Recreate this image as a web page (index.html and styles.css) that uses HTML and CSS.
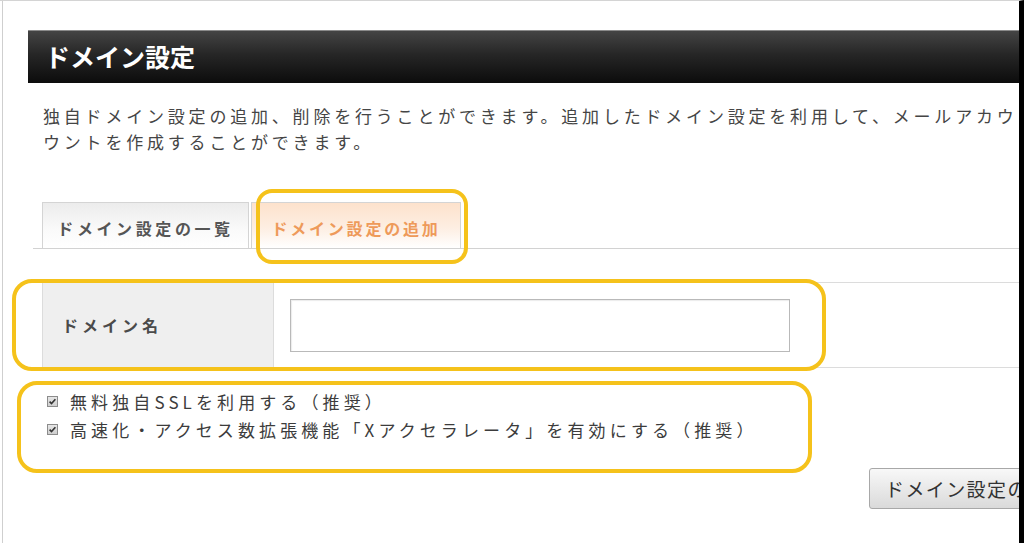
FILE: index.html
```html
<!DOCTYPE html>
<html lang="ja">
<head>
<meta charset="utf-8">
<title>ドメイン設定</title>
<link rel="stylesheet" href="styles.css">
</head>
<body>
<div class="page">
  <div class="frame">
    <h1 class="title-bar">ドメイン設定</h1>
    <p class="desc">独自ドメイン設定の追加、削除を行うことができます。追加したドメイン設定を利用して、メールアカウ<br>ウントを作成することができます。</p>

    <div class="tabs">
      <div class="tab">ドメイン設定の一覧</div>
      <div class="tab active">ドメイン設定の追加</div>
    </div>

    <div class="form-row">
      <div class="label-cell">ドメイン名</div>
      <div class="input-cell"><input class="text-input" type="text"></div>
    </div>

    <div class="options">
      <label class="option"><span class="check"><svg viewBox="0 0 11 11" width="11" height="11"><path d="M2.6 5.6 L4.5 7.6 L8.4 3.2" fill="none" stroke="#333" stroke-width="1.6"/></svg></span><span class="opt-text">無料独自SSLを利用する（推奨）</span></label>
      <label class="option"><span class="check"><svg viewBox="0 0 11 11" width="11" height="11"><path d="M2.6 5.6 L4.5 7.6 L8.4 3.2" fill="none" stroke="#333" stroke-width="1.6"/></svg></span><span class="opt-text">高速化・アクセス数拡張機能「Xアクセラレータ」を有効にする（推奨）</span></label>
    </div>

    <div class="actions">
      <button class="btn" type="button">ドメイン設定の追加（確認）</button>
    </div>
  </div>

  <div class="mark mark-tab"></div>
  <div class="mark mark-row"></div>
  <div class="mark mark-opts"></div>
</div>
</body>
</html>
```
FILE: styles.css
```css
html, body {
  margin: 0;
  padding: 0;
  background: #fff;
}

body {
  font-family: "Noto Sans CJK JP", "Noto Sans", sans-serif;
  color: #444;
}

.page {
  position: relative;
  width: 1024px;
  height: 543px;
  box-sizing: border-box;
  border-top: 1px solid #d4d4d4;
  border-right: 5px solid #000;
  overflow: hidden;
}

.frame {
  margin-left: 2px;
  height: 100%;
  box-sizing: border-box;
  border-left: 1px solid #cfcfcf;
  padding: 29px 0 0 25px;
}

.title-bar {
  margin: 0;
  height: 53px;
  box-sizing: border-box;
  border-top: 1px solid #8a8a8a;
  background: linear-gradient(#444 0%, #262626 45%, #0c0c0c 100%);
  color: #fff;
  font-size: 25px;
  font-weight: bold;
  line-height: 50px;
  padding-left: 17px;
  white-space: nowrap;
}

.desc {
  margin: 20px 0 0 0;
  padding-left: 15px;
  font-size: 17px;
  letter-spacing: 3.8px;
  line-height: 26px;
  white-space: nowrap;
  color: #454545;
}

.tabs {
  margin: 47px 0 0 5px;
  padding-left: 9px;
  display: flex;
  gap: 2px;
  border-bottom: 1px solid #d2d2d2;
}

.tab {
  height: 46px;
  box-sizing: border-box;
  width: 207px;
  border: 1px solid #d4d4d4;
  border-bottom: none;
  background: linear-gradient(#ececec, #fafafa 60%, #fff);
  font-size: 16px;
  font-weight: bold;
  letter-spacing: 3.6px;
  color: #555;
  display: flex;
  align-items: center;
  justify-content: center;
  padding-top: 4px;
}

.tab.active {
  width: 210px;
  background: linear-gradient(#fde2cc, #fdeee2 55%, #fff);
  color: #ee9a5a;
  letter-spacing: 2.8px;
}

.form-row {
  margin: 33px 0 0 14px;
  display: flex;
  height: 86px;
  box-sizing: border-box;
  border-top: 1px solid #dcdcdc;
  border-bottom: 1px solid #dcdcdc;
  border-left: 1px solid #dcdcdc;
}

.label-cell {
  width: 231px;
  box-sizing: border-box;
  background: #efefef;
  border-right: 1px solid #dcdcdc;
  padding-left: 19px;
  display: flex;
  align-items: center;
  font-size: 16px;
  font-weight: bold;
  letter-spacing: 4px;
  color: #4a4a4a;
}

.input-cell {
  flex: 1;
  padding-left: 16px;
  display: flex;
  align-items: center;
}

.text-input {
  width: 500px;
  height: 53px;
  box-sizing: border-box;
  border: 1px solid #b9b9b9;
  box-shadow: inset 1px 1px 1px rgba(0, 0, 0, 0.08);
  margin: 0;
  padding: 0 8px;
  font-size: 17px;
  font-family: inherit;
  background: #fff;
}

.options {
  margin: 19px 0 0 19px;
  display: flex;
  flex-direction: column;
}

.option {
  display: flex;
  align-items: center;
  height: 28px;
  white-space: nowrap;
}

.check {
  width: 11px;
  height: 11px;
  box-sizing: border-box;
  border: 1px solid #8c8c8c;
  background: linear-gradient(#e6e6e6, #cfcfcf);
  display: flex;
  align-items: center;
  justify-content: center;
  margin-right: 12px;
}

.check svg {
  display: block;
  flex: none;
}

.opt-text {
  font-size: 17px;
  letter-spacing: 4.1px;
  color: #3c3c3c;
}

.actions {
  margin-top: 25px;
  padding-left: 841px;
  display: flex;
}

.btn {
  flex: none;
  height: 41px;
  box-sizing: border-box;
  padding: 0 14px 0 15px;
  border: 1px solid #a8a8a8;
  border-radius: 3px;
  background: linear-gradient(#f8f8f8, #e9e9e9 50%, #dadada);
  font-family: inherit;
  font-size: 19px;
  letter-spacing: 1.4px;
  color: #333;
  white-space: nowrap;
}

.mark {
  position: absolute;
  box-sizing: border-box;
  border: 4px solid #f5c21b;
  pointer-events: none;
}

.mark-tab {
  left: 256px;
  top: 188px;
  width: 212px;
  height: 75px;
  border-radius: 16px;
}

.mark-row {
  left: 12px;
  top: 278px;
  width: 814px;
  height: 92px;
  border-radius: 20px;
}

.mark-opts {
  left: 17px;
  top: 380px;
  width: 795px;
  height: 92px;
  border-radius: 20px;
}
```
